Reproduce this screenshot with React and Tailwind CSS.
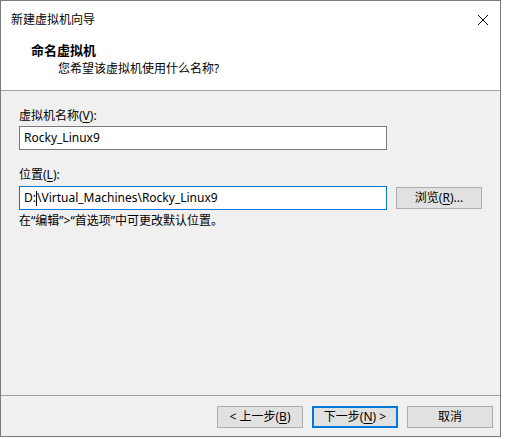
import React from "react";

const font = "font-['Noto_Sans','Noto_Sans_CJK_SC',sans-serif]";

const Key = ({ children }) => <span className="underline underline-offset-2">{children}</span>;

const Btn = ({ children, primary }) => (
  <div
    className={`w-[86px] h-[22px] flex items-center justify-center bg-[#e1e1e1] text-[12px] leading-[16px] text-black ${
      primary ? "border-2 border-[#0078d7]" : "border border-[#adadad]"
    }`}
  >
    {children}
  </div>
);

export default function App() {
  return (
    <div className={`w-[505px] h-[439px] bg-white ${font}`}>
      <div className="w-[501px] h-[437px] border border-[#7a7a7a] flex flex-col bg-[#f0f0f0]">
        {/* title bar + header */}
        <div className="h-[90px] bg-white border-b border-[#a0a0a0] relative">
          <div className="flex items-center justify-between pl-[10px] pr-[10px] pt-[11px]">
            <span className="text-[12px] leading-[16px] text-black">新建虚拟机向导</span>
            <svg width="12" height="12" viewBox="0 0 12 12" className="mr-[1px]">
              <path d="M1 1 L11 11 M11 1 L1 11" stroke="#111" strokeWidth="1" />
            </svg>
          </div>
          <div className="pl-[30px] mt-[14px]">
            <div className="text-[13px] leading-[17px] font-bold text-black">命名虚拟机</div>
            <div className="pl-[27px] mt-[2px] text-[12px] leading-[16px] text-black">您希望该虚拟机使用什么名称?</div>
          </div>
        </div>

        {/* body */}
        <div className="flex-1 px-[18px] pt-[17px] text-[12px] leading-[16px] text-black">
          <div>
            虚拟机名称(<Key>V</Key>):
          </div>
          <div className="mt-[2px] w-[368px] h-[24px] border border-[#7a7a7a] bg-white flex items-center px-[4px]">
            Rocky_Linux9
          </div>
          <div className="mt-[17px]">
            位置(<Key>L</Key>):
          </div>
          <div className="mt-[3px] flex items-center gap-[9px]">
            <div className="w-[368px] h-[24px] border border-[#0078d7] bg-white flex items-center px-[4px]">
              D:
              <span className="inline-block w-px h-[15px] bg-black" />
              \Virtual_Machines\Rocky_Linux9
            </div>
            <Btn>
              浏览(<Key>R</Key>)...
            </Btn>
          </div>
          <div className="mt-[3px]">在“编辑”&gt;“首选项”中可更改默认位置。</div>
        </div>

        {/* footer */}
        <div className="h-[41px] border-t border-[#a0a0a0] flex items-start justify-end gap-[9px] pt-[10px] pr-[7px]">
          <Btn>
            &lt; 上一步(<Key>B</Key>)
          </Btn>
          <Btn primary>
            下一步(<Key>N</Key>) &gt;
          </Btn>
          <Btn>取消</Btn>
        </div>
      </div>
    </div>
  );
}
